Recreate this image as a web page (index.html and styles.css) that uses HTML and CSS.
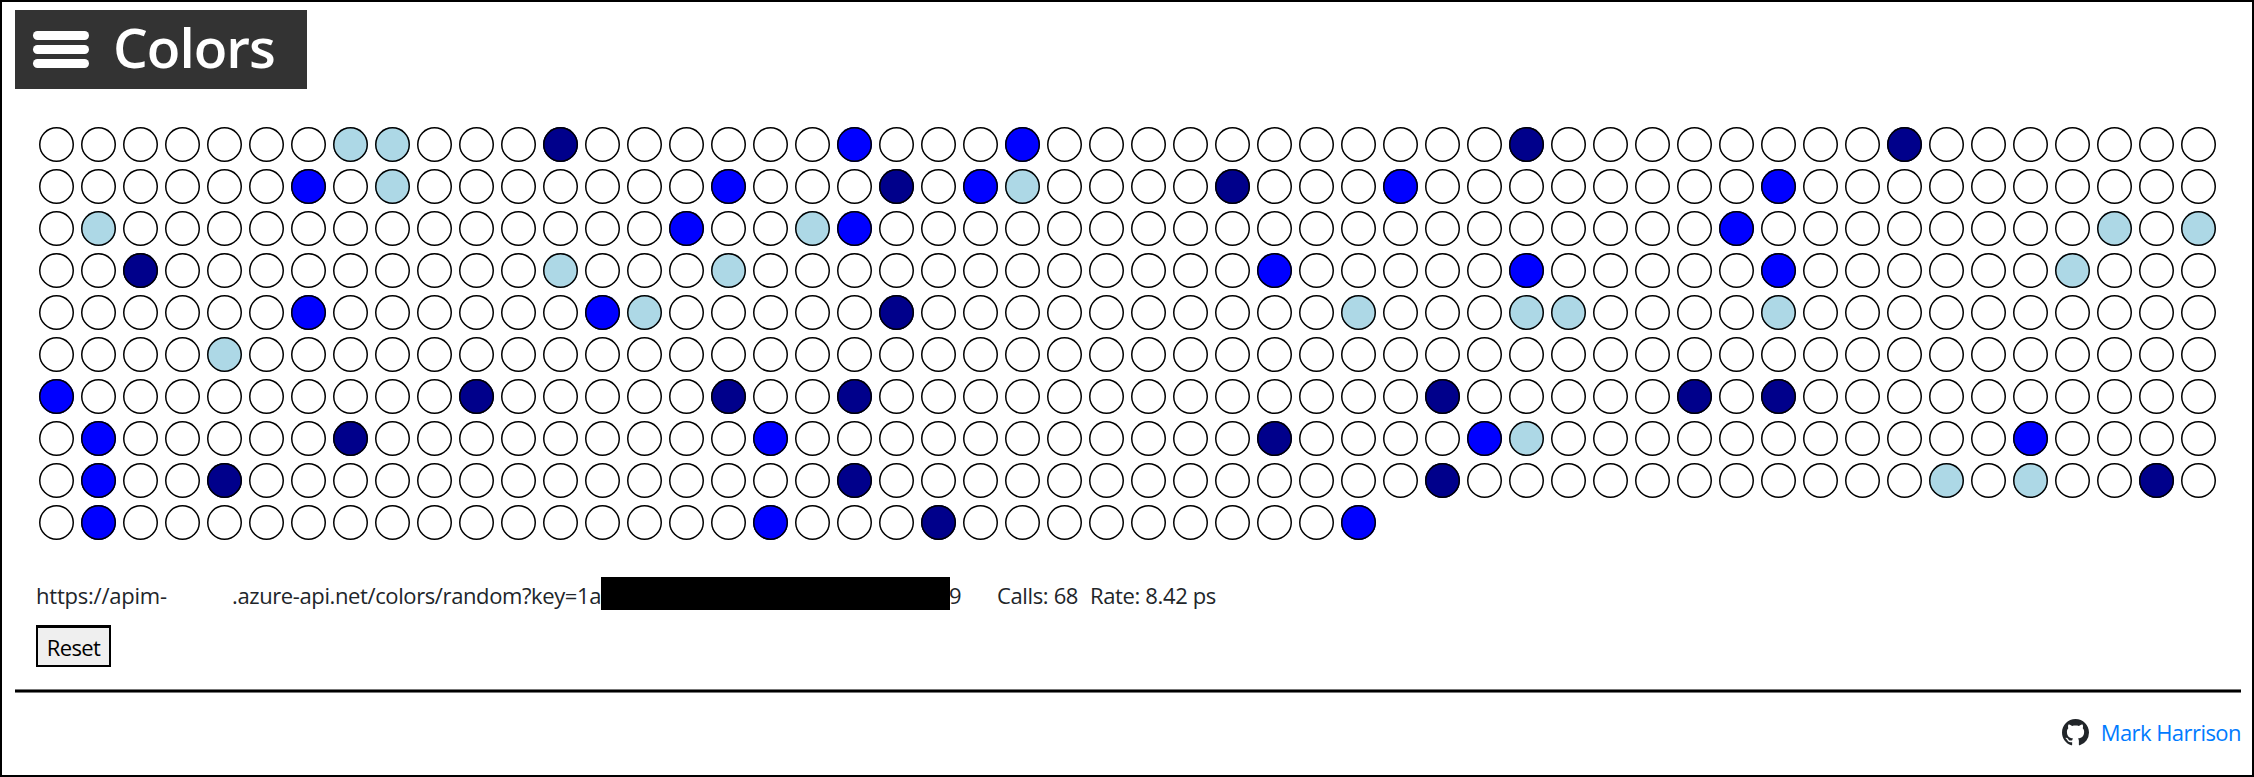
FILE: index.html
```html
<!DOCTYPE html>
<html lang="en">
<head>
<meta charset="utf-8">
<title>Colors</title>
<link rel="stylesheet" href="styles.css">
</head>
<body>
<div class="page">
  <header class="brand">
    <span class="menu"><i></i><i></i><i></i></span>
    <span class="brand-name">Colors</span>
  </header>
  <main class="content">
    <div class="grid" id="grid"></div>
    <div class="status">
      <span class="host">https://apim-</span>
      <span class="path">.azure-api.net/colors/random?key=1a</span>
      <span class="redacted"></span>
      <span class="key-end">9</span>
      <span class="calls">Calls: 68</span>
      <span class="rate">Rate: 8.42 ps</span>
    </div>
    <button class="reset" type="button">Reset</button>
  </main>
  <hr class="rule">
  <footer class="footer">
    <svg class="github" viewBox="0 0 16 16" aria-hidden="true"><path fill="currentColor" d="M8 0C3.58 0 0 3.58 0 8c0 3.54 2.29 6.53 5.47 7.59.4.07.55-.17.55-.38 0-.19-.01-.82-.01-1.49-2.01.37-2.53-.49-2.69-.94-.09-.23-.48-.94-.82-1.13-.28-.15-.68-.52-.01-.53.63-.01 1.08.58 1.23.82.72 1.21 1.87.87 2.33.66.07-.52.28-.87.51-1.07-1.78-.2-3.64-.89-3.64-3.95 0-.87.31-1.59.82-2.15-.08-.2-.36-1.02.08-2.12 0 0 .67-.21 2.2.82.64-.18 1.32-.27 2-.27s1.36.09 2 .27c1.53-1.04 2.2-.82 2.2-.82.44 1.1.16 1.92.08 2.12.51.56.82 1.27.82 2.15 0 3.07-1.87 3.75-3.65 3.95.29.25.54.73.54 1.48 0 1.07-.01 1.93-.01 2.2 0 .21.15.46.55.38A8.01 8.01 0 0 0 16 8c0-4.42-3.58-8-8-8z"/></svg>
    <a class="author">Mark Harrison</a>
  </footer>
</div>
<script src="grid.js"></script>
</body>
</html>
```

FILE: styles.css
```css
* { box-sizing: border-box; }
body {
  margin: 0;
  background: #fff;
  color: #212529;
  font-family: "Open Sans", "Noto Sans", sans-serif;
  font-size: 22px;
  line-height: 34px;
}
.page {
  height: 777px;
  border: 2px solid #000;
  padding: 8px 11px 0 13px;
  display: flex;
  flex-direction: column;
}
.brand {
  width: 292px;
  height: 79px;
  padding-left: 18px;
  background: #333;
  color: #fff;
  display: flex;
  align-items: center;
  gap: 24px;
}
.menu { display: flex; flex-direction: column; gap: 5px; }
.menu i { width: 56px; height: 9px; border-radius: 5px; background: #fff; }
.brand-name {
  font-size: 55px;
  font-weight: 600;
  letter-spacing: -1px;
  line-height: 79px;
  margin-top: -7px;
}
.content { padding: 38px 0 0 21px; }
.grid {
  display: grid;
  grid-template-columns: repeat(52, 35px);
  grid-auto-rows: 35px;
  gap: 7px;
  padding-left: 3px;
}
.dot { border-radius: 50%; box-shadow: inset 0 0 0 1.5px #000; }
.light { background: #add8e6; }
.blue { background: #00f; }
.navy { background: #00008b; }
.status {
  display: flex;
  height: 33px;
  line-height: 36px;
  margin-top: 37px;
  white-space: nowrap;
  letter-spacing: -0.36px;
}
.host { width: 196px; letter-spacing: -0.22px; }
.path { width: 369px; letter-spacing: -0.39px; }
.redacted { width: 349px; height: 33px; background: #000; }
.key-end { width: 47px; margin-left: -1px; margin-right: 1px; }
.calls { width: 93px; }
.reset {
  display: block;
  width: 75px;
  height: 42px;
  margin-top: 15px;
  padding: 0;
  border: 2px solid #000;
  border-top-width: 3px;
  background: #efefef;
  color: #000;
  font: inherit;
  letter-spacing: -0.6px;
  line-height: 38px;
}
.rule {
  width: 100%;
  height: 4px;
  margin: 22px 0 0;
  border: solid #777;
  border-width: 1px 0;
  background: #000;
}
.footer {
  display: flex;
  justify-content: flex-end;
  align-items: center;
  gap: 12px;
  margin-top: 22px;
}
.github { width: 27px; height: 27px; }
.author { color: #007bff; letter-spacing: -0.55px; }
```

FILE: grid.js
```js
// Coloured cells per row: [column, colour]
const L = "light", B = "blue", N = "navy";
const columns = 52, total = 500;
const rows = [
  [[7, L], [8, L], [12, N], [19, B], [23, B], [35, N], [44, N]],
  [[6, B], [8, L], [16, B], [20, N], [22, B], [23, L], [28, N], [32, B], [41, B]],
  [[1, L], [15, B], [18, L], [19, B], [40, B], [49, L], [51, L]],
  [[2, N], [12, L], [16, L], [29, B], [35, B], [41, B], [48, L]],
  [[6, B], [13, B], [14, L], [20, N], [31, L], [35, L], [36, L], [41, L]],
  [[4, L]],
  [[0, B], [10, N], [16, N], [19, N], [33, N], [39, N], [41, N]],
  [[1, B], [7, N], [17, B], [29, N], [34, B], [35, L], [47, B]],
  [[1, B], [4, N], [19, N], [33, N], [45, L], [47, L], [50, N]],
  [[1, B], [17, B], [21, N], [31, B]]
];
const colours = {};
rows.forEach((cells, r) => cells.forEach(([c, name]) => { colours[r * columns + c] = name; }));
const grid = document.getElementById("grid");
for (let i = 0; i < total; i++) {
  const dot = document.createElement("div");
  dot.className = "dot" + (colours[i] ? " " + colours[i] : "");
  grid.appendChild(dot);
}
```
